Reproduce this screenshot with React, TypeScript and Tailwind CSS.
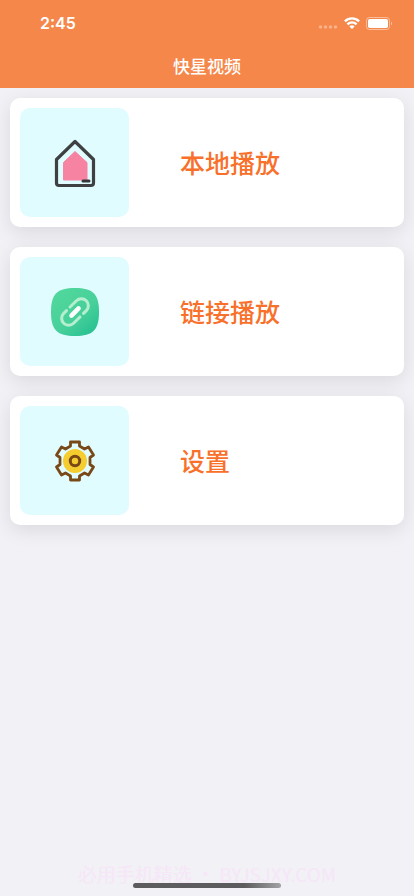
import React from "react";

interface MenuItem {
  label: string;
  icon: React.ReactNode;
}

const HouseIcon = () => (
  <svg width="50" height="50" viewBox="0 0 50 50" fill="none" aria-hidden="true">
    <path d="M25 13.5L37 24.5V42H13.5V24.5Z" fill="#f783a3" stroke="#f783a3" strokeLinejoin="round" />
    <path
      d="M25 3.5L43.5 21.5V45Q43.5 47.5 41 47.5H9Q6.5 47.5 6.5 45V21.5Z"
      stroke="#3f4042"
      strokeWidth="3.2"
      strokeLinejoin="round"
    />
    <path d="M33 43H39" stroke="#353638" strokeWidth="3" strokeLinecap="round" />
  </svg>
);

const LinkIcon = () => (
  <svg width="50" height="50" viewBox="0 0 50 50" fill="none" aria-hidden="true">
    <defs>
      <linearGradient id="link-bg" x1="10" y1="5" x2="44" y2="46" gradientUnits="userSpaceOnUse">
        <stop stopColor="#50d79c" />
        <stop offset="0.55" stopColor="#48d09b" />
        <stop offset="1" stopColor="#27c091" />
      </linearGradient>
    </defs>
    <path d="M25 1C43 1 49 7 49 25S43 49 25 49S1 43 1 25S7 1 25 1Z" fill="url(#link-bg)" />
    <g transform="rotate(-45 25 25)" stroke="#b5efcf" strokeWidth="3" strokeLinecap="round">
      <path d="M25 18H34A7 7 0 0 1 34 32H30" />
      <path d="M25 32H16A7 7 0 0 1 16 18H20" />
      <path d="M20 25H30" stroke="#fff" strokeWidth="4.6" />
    </g>
  </svg>
);

const GearIcon = () => (
  <svg width="50" height="50" viewBox="0 0 50 50" fill="none" aria-hidden="true">
    <circle cx="25" cy="25" r="12" fill="#f5cd2f" />
    <circle cx="25" cy="25" r="4.7" stroke="#794817" strokeWidth="3" />
    <path
      d="M20.500 6H29.500V10L34.500 13L38.500 11L43.500 19L40 21.500V28.500L43.500 31L38.500 39L34.500 37L29.500 40V44H20.500V40L15.500 37L11.500 39L6.500 31L10 28.500V21.500L6.500 19L11.500 11L15.500 13L20.500 10Z"
      stroke="#794817"
      strokeWidth="2.8"
      strokeLinejoin="round"
    />
  </svg>
);

const items: MenuItem[] = [
  { label: "本地播放", icon: <HouseIcon /> },
  { label: "链接播放", icon: <LinkIcon /> },
  { label: "设置", icon: <GearIcon /> },
];

const StatusBar = () => (
  <div className="flex h-11 items-center justify-between pt-0.5 pr-[21px] pl-10">
    <span className="font-['Inter','Noto_Sans',sans-serif] text-base font-semibold">2:45</span>
    <div className="flex items-center gap-1.5">
      <svg width="20" height="12" viewBox="0 0 20 12" fill="#fff" fillOpacity="0.35" aria-hidden="true">
        <circle cx="2.5" cy="10" r="1.8" />
        <circle cx="7.5" cy="10" r="1.8" />
        <circle cx="12.5" cy="10" r="1.8" />
        <circle cx="17.5" cy="10" r="1.8" />
      </svg>
      <svg width="16" height="12" viewBox="0 0 16 12" fill="none" stroke="#fff" strokeWidth="2.4" aria-hidden="true">
        <path d="M0.9 4.3C5 0.4 11 0.4 15.100 4.3" />
        <path d="M3.400 7.300C6.100 4.800 9.900 4.800 12.600 7.300" />
        <path d="M8 12L5.400 9.400C6.900 8 9.100 8 10.600 9.400Z" fill="#fff" stroke="none" />
      </svg>
      <svg width="27" height="13" viewBox="0 0 27 13" fill="none" aria-hidden="true">
        <rect x="0.5" y="0.5" width="23" height="12" rx="3" stroke="#fff" strokeOpacity="0.45" />
        <rect x="2" y="2" width="20" height="9" rx="1.8" fill="#fff" />
        <path d="M25 4.5C26.3 5 26.3 8 25 8.5Z" fill="#fff" fillOpacity="0.5" />
      </svg>
    </div>
  </div>
);

const MenuCard: React.FC<MenuItem> = ({ label, icon }) => (
  <button className="flex w-full items-center gap-[51px] rounded-[10px] bg-white p-2.5 text-left shadow-[0_5px_20px_rgba(0,0,0,0.1)]">
    <span className="flex size-[109px] shrink-0 items-center justify-center rounded-[10px] bg-[#e0fcff]">
      {icon}
    </span>
    <span className="text-[25px] font-medium text-[#f8702a]">{label}</span>
  </button>
);

export default function App() {
  return (
    <div className="flex min-h-screen flex-col bg-[#f2f1f6] font-['Noto_Sans_CJK_SC',sans-serif]">
      <header className="bg-[#f5874a] text-white">
        <StatusBar />
        <h1 className="flex h-11 items-center justify-center text-[17px] font-medium">快星视频</h1>
      </header>

      <main className="flex flex-1 flex-col gap-5 overflow-hidden p-2.5">
        {items.map((item) => (
          <MenuCard key={item.label} {...item} />
        ))}
      </main>

      <footer className="relative pb-2">
        <p className="text-center text-[19px] leading-7 text-[#f6e6f8]">必用手机精选 · BYJSJXY.COM</p>
        <div className="absolute inset-x-0 bottom-2 mx-auto h-[5px] w-[148px] rounded-full bg-linear-to-r from-[#5c5b5d] from-75% to-[#a3a2a5]" />
      </footer>
    </div>
  );
}
